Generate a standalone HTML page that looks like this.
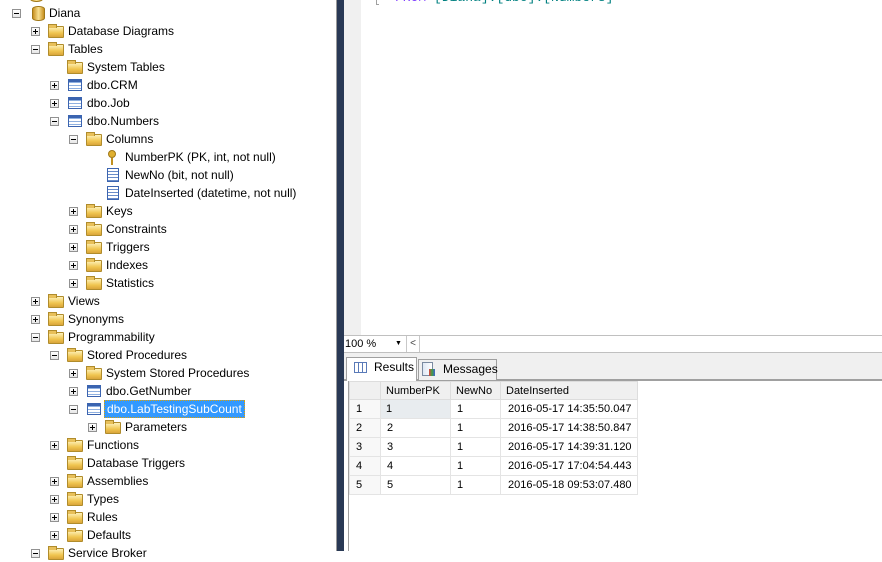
<!DOCTYPE html>
<html><head><style>
*{margin:0;padding:0;box-sizing:border-box}
body{width:882px;height:551px;overflow:hidden;background:#fff;font-family:"Liberation Sans",sans-serif;font-size:12px;color:#000;position:relative}
.r{position:absolute;height:18px;line-height:18px;white-space:nowrap}
.e{position:absolute;width:9px;height:9px;border:1px solid #919191;background:linear-gradient(#fff,#e6e6e6);top:5px}
.e:before{content:"";position:absolute;left:1px;top:3px;width:5px;height:1px;background:#000}
.e.p:after{content:"";position:absolute;left:3px;top:1px;width:1px;height:5px;background:#000}
.f{position:absolute;top:4px;width:16px;height:12px;border:1px solid #b08c2c;border-radius:1px;background:linear-gradient(#fdf1b9,#f0c550 60%,#d9a53a)}
.f:before{content:"";position:absolute;left:-1px;top:-3px;width:7px;height:3px;background:#e8c05a;border:1px solid #b08c2c;border-bottom:none}
.t{position:absolute;top:3px;width:14px;height:12px;border:1px solid #3b64b0;background:repeating-linear-gradient(#fff 0 2px,#8fb0e0 2px 3px);}
.t:before{content:"";position:absolute;left:0;top:0;right:0;height:2px;background:#3b64b0}
.c{position:absolute;top:2px;width:12px;height:14px;border:1px solid #3b64b0;background:repeating-linear-gradient(#fff 0 2px,#6a8cc8 2px 3px)}
.k{position:absolute;top:2px;width:8px;height:8px;border-radius:50%;background:#e0b030;border:1px solid #a07818}
.k:after{content:"";position:absolute;left:2px;top:7px;width:2px;height:7px;background:#c09020}
.d{position:absolute;top:2px;width:13px;height:15px;border-radius:6px/3px;background:linear-gradient(90deg,#c89020,#f8e090,#c89020);border:1px solid #a07818}
.x{position:absolute}
table.g{table-layout:fixed;white-space:nowrap;font-size:11px}
table.g td{overflow:hidden}
</style></head><body>

<div class="r" style="top:-15px"><span class="e" style="left:12px"></span><span class="d" style="left:30px"></span></div>
<div class="r" style="top:4px"><span class="e" style="left:12px"></span><span class="d" style="left:32px"></span><span class="x" style="left:49px">Diana</span></div>
<div class="r" style="top:22px"><span class="e p" style="left:31px"></span><span class="f" style="left:48px"></span><span class="x" style="left:68px">Database Diagrams</span></div>
<div class="r" style="top:40px"><span class="e" style="left:31px"></span><span class="f" style="left:48px"></span><span class="x" style="left:68px">Tables</span></div>
<div class="r" style="top:58px"><span class="f" style="left:67px"></span><span class="x" style="left:87px">System Tables</span></div>
<div class="r" style="top:76px"><span class="e p" style="left:50px"></span><span class="t" style="left:68px"></span><span class="x" style="left:87px">dbo.CRM</span></div>
<div class="r" style="top:94px"><span class="e p" style="left:50px"></span><span class="t" style="left:68px"></span><span class="x" style="left:87px">dbo.Job</span></div>
<div class="r" style="top:112px"><span class="e" style="left:50px"></span><span class="t" style="left:68px"></span><span class="x" style="left:87px">dbo.Numbers</span></div>
<div class="r" style="top:130px"><span class="e" style="left:69px"></span><span class="f" style="left:86px"></span><span class="x" style="left:106px">Columns</span></div>
<div class="r" style="top:148px"><span class="k" style="left:108px"></span><span class="x" style="left:125px">NumberPK (PK, int, not null)</span></div>
<div class="r" style="top:166px"><span class="c" style="left:107px"></span><span class="x" style="left:125px">NewNo (bit, not null)</span></div>
<div class="r" style="top:184px"><span class="c" style="left:107px"></span><span class="x" style="left:125px">DateInserted (datetime, not null)</span></div>
<div class="r" style="top:202px"><span class="e p" style="left:69px"></span><span class="f" style="left:86px"></span><span class="x" style="left:106px">Keys</span></div>
<div class="r" style="top:220px"><span class="e p" style="left:69px"></span><span class="f" style="left:86px"></span><span class="x" style="left:106px">Constraints</span></div>
<div class="r" style="top:238px"><span class="e p" style="left:69px"></span><span class="f" style="left:86px"></span><span class="x" style="left:106px">Triggers</span></div>
<div class="r" style="top:256px"><span class="e p" style="left:69px"></span><span class="f" style="left:86px"></span><span class="x" style="left:106px">Indexes</span></div>
<div class="r" style="top:274px"><span class="e p" style="left:69px"></span><span class="f" style="left:86px"></span><span class="x" style="left:106px">Statistics</span></div>
<div class="r" style="top:292px"><span class="e p" style="left:31px"></span><span class="f" style="left:48px"></span><span class="x" style="left:68px">Views</span></div>
<div class="r" style="top:310px"><span class="e p" style="left:31px"></span><span class="f" style="left:48px"></span><span class="x" style="left:68px">Synonyms</span></div>
<div class="r" style="top:328px"><span class="e" style="left:31px"></span><span class="f" style="left:48px"></span><span class="x" style="left:68px">Programmability</span></div>
<div class="r" style="top:346px"><span class="e" style="left:50px"></span><span class="f" style="left:67px"></span><span class="x" style="left:87px">Stored Procedures</span></div>
<div class="r" style="top:364px"><span class="e p" style="left:69px"></span><span class="f" style="left:86px"></span><span class="x" style="left:106px">System Stored Procedures</span></div>
<div class="r" style="top:382px"><span class="e p" style="left:69px"></span><span class="t" style="left:87px"></span><span class="x" style="left:106px">dbo.GetNumber</span></div>
<div class="r" style="top:400px"><span class="e" style="left:69px"></span><span class="t" style="left:87px"></span><span class="x" style="left:104px;top:0px;height:18px;line-height:16px;padding:0 2px;background:#3399ff;color:#fff;border:1px dotted #e0a000">dbo.LabTestingSubCount</span></div>
<div class="r" style="top:418px"><span class="e p" style="left:88px"></span><span class="f" style="left:105px"></span><span class="x" style="left:125px">Parameters</span></div>
<div class="r" style="top:436px"><span class="e p" style="left:50px"></span><span class="f" style="left:67px"></span><span class="x" style="left:87px">Functions</span></div>
<div class="r" style="top:454px"><span class="f" style="left:67px"></span><span class="x" style="left:87px">Database Triggers</span></div>
<div class="r" style="top:472px"><span class="e p" style="left:50px"></span><span class="f" style="left:67px"></span><span class="x" style="left:87px">Assemblies</span></div>
<div class="r" style="top:490px"><span class="e p" style="left:50px"></span><span class="f" style="left:67px"></span><span class="x" style="left:87px">Types</span></div>
<div class="r" style="top:508px"><span class="e p" style="left:50px"></span><span class="f" style="left:67px"></span><span class="x" style="left:87px">Rules</span></div>
<div class="r" style="top:526px"><span class="e p" style="left:50px"></span><span class="f" style="left:67px"></span><span class="x" style="left:87px">Defaults</span></div>
<div class="r" style="top:544px"><span class="e" style="left:31px"></span><span class="f" style="left:48px"></span><span class="x" style="left:68px">Service Broker</span></div>

<div class="x" style="left:336px;top:0;width:1px;height:551px;background:#999"></div>
<div class="x" style="left:337px;top:0;width:7px;height:551px;background:#293955"></div>
<div class="x" style="left:344px;top:0;width:17px;height:336px;background:#f0f0f0"></div>
<div class="x" style="left:376px;top:-8px;width:3px;height:13px;border-left:1px solid #a0a0a0;border-bottom:1px solid #a0a0a0"></div>
<div class="x" style="left:395px;top:-9px;font-family:'Liberation Mono',monospace;font-size:13px;line-height:14px"><span style="color:#8040ff">FROM</span> <span style="color:#008080">[Diana].[dbo].[Numbers]</span></div>
<div class="x" style="left:344px;top:335px;width:538px;height:18px;border-top:1px solid #c0c0c0;border-bottom:1px solid #c0c0c0;background:#fff"></div>
<div class="x" style="left:345px;top:336px;width:60px;height:16px;line-height:16px;font-size:11px">100 %<span style="position:absolute;left:50px;font-size:7px">&#9660;</span></div>
<div class="x" style="left:406px;top:336px;width:14px;height:16px;border-left:1px solid #c8c8c8;border-right:1px solid #c8c8c8;line-height:16px;text-align:center;font-size:10px;color:#444">&lt;</div>
<div class="x" style="left:344px;top:353px;width:538px;height:28px;background:#f0f0f0;border-bottom:2px solid #a0a0a0"></div>
<div class="x" style="left:346px;top:357px;width:71px;height:24px;background:#fff;border:1px solid #a0a0a0;border-bottom:none"></div>
<div class="x" style="left:354px;top:362px;width:13px;height:11px;border:1px solid #5a7ab8;background:repeating-linear-gradient(90deg,#fff 0 3px,#5a7ab8 3px 4px),#fff"></div>
<div class="x" style="left:374px;top:360px;font-size:12px;line-height:15px">Results</div>
<div class="x" style="left:418px;top:359px;width:79px;height:21px;background:#f0f0f0;border:1px solid #a0a0a0;border-bottom:none"></div>
<div class="x" style="left:422px;top:362px;width:11px;height:14px;border:1px solid #7a8aa0;background:linear-gradient(90deg,#dfe8f4,#fff)"></div>
<div class="x" style="left:429px;top:369px;width:6px;height:7px;background:linear-gradient(90deg,#e04040,#40a040,#4060d0)"></div>
<div class="x" style="left:443px;top:362px;font-size:12px;line-height:15px">Messages</div>
<div class="x" style="left:348px;top:381px;width:1px;height:170px;background:#a0a0a0"></div>
<table class="x g" style="left:349px;top:381px;width:288px;border-collapse:collapse">
<colgroup><col style="width:31px"><col style="width:70px"><col style="width:50px"><col style="width:137px"></colgroup>
<tr style="height:18px;background:#f0f0f0"><td style="border:1px solid #ddd"></td><td style="border:1px solid #ddd;padding-left:5px">NumberPK</td><td style="border:1px solid #ddd;padding-left:5px">NewNo</td><td style="border:1px solid #ddd;padding-left:5px">DateInserted</td></tr>
<tr style="height:19px"><td style="border:1px solid #e4e4e4;padding-left:6px;background:#f8f8f8">1</td><td style="border:1px dotted #000;padding-left:5px;background:#e8ecef">1</td><td style="border:1px solid #e4e4e4;padding-left:6px">1</td><td style="border:1px solid #e4e4e4;padding-left:7px">2016-05-17 14:35:50.047</td></tr>
<tr style="height:19px"><td style="border:1px solid #e4e4e4;padding-left:6px;background:#f8f8f8">2</td><td style="border:1px solid #e4e4e4;padding-left:6px">2</td><td style="border:1px solid #e4e4e4;padding-left:6px">1</td><td style="border:1px solid #e4e4e4;padding-left:7px">2016-05-17 14:38:50.847</td></tr>
<tr style="height:19px"><td style="border:1px solid #e4e4e4;padding-left:6px;background:#f8f8f8">3</td><td style="border:1px solid #e4e4e4;padding-left:6px">3</td><td style="border:1px solid #e4e4e4;padding-left:6px">1</td><td style="border:1px solid #e4e4e4;padding-left:7px">2016-05-17 14:39:31.120</td></tr>
<tr style="height:19px"><td style="border:1px solid #e4e4e4;padding-left:6px;background:#f8f8f8">4</td><td style="border:1px solid #e4e4e4;padding-left:6px">4</td><td style="border:1px solid #e4e4e4;padding-left:6px">1</td><td style="border:1px solid #e4e4e4;padding-left:7px">2016-05-17 17:04:54.443</td></tr>
<tr style="height:19px"><td style="border:1px solid #e4e4e4;padding-left:6px;background:#f8f8f8">5</td><td style="border:1px solid #e4e4e4;padding-left:6px">5</td><td style="border:1px solid #e4e4e4;padding-left:6px">1</td><td style="border:1px solid #e4e4e4;padding-left:7px">2016-05-18 09:53:07.480</td></tr>
</table>
</body></html>
